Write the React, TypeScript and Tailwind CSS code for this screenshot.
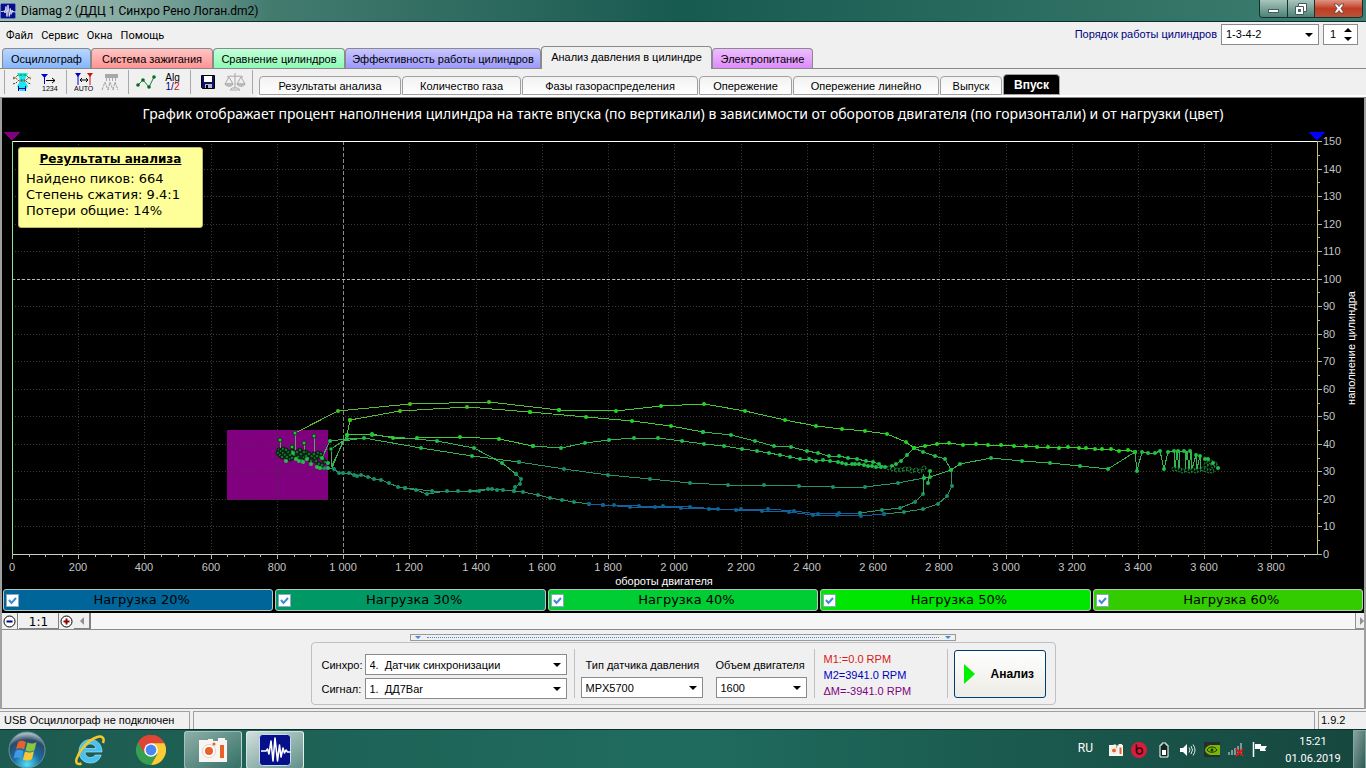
import { useState, type ReactNode } from 'react'

const MENU = ['Файл', 'Сервис', 'Окна', 'Помощь']

const TABS = [
  { label: 'Осциллограф', cls: 'w-[89px] bg-linear-to-b from-[#b9d6ff] to-[#86b6fb]' },
  { label: 'Система зажигания', cls: 'w-[122px] bg-linear-to-b from-[#ffc4c4] to-[#ff9494]' },
  { label: 'Сравнение цилиндров', cls: 'w-[132px] bg-linear-to-b from-[#c2ffda] to-[#8dfab4]' },
  { label: 'Эффективность работы цилиндров', cls: 'w-[196px] bg-linear-to-b from-[#c8c6ff] to-[#9c98fb]' },
  { label: 'Анализ давления в цилиндре', cls: 'w-[171px]' },
  { label: 'Электропитание', cls: 'w-[101px] bg-linear-to-b from-[#eebcff] to-[#dd8cfa]' },
]

const VIEWS = [
  { label: 'Результаты анализа', cls: 'w-[142px]' },
  { label: 'Количество газа', cls: 'w-[119px]' },
  { label: 'Фазы газораспределения', cls: 'w-[176px]' },
  { label: 'Опережение', cls: 'w-[93px]' },
  { label: 'Опережение линейно', cls: 'w-[146px]' },
  { label: 'Выпуск', cls: 'w-[62px]' },
  { label: 'Впуск', cls: 'w-[57px]' },
]

const LOADS = [
  { label: 'Нагрузка 20%', cls: 'bg-[#006699]' },
  { label: 'Нагрузка 30%', cls: 'bg-[#009966]' },
  { label: 'Нагрузка 40%', cls: 'bg-[#00cc33]' },
  { label: 'Нагрузка 50%', cls: 'bg-[#00e600]' },
  { label: 'Нагрузка 60%', cls: 'bg-[#33cc00]' },
]

type Pt = [number, number]
interface Series {
  load: number
  dots?: boolean
  pts: Pt[]
}

const LOAD_COLORS: Record<number, string> = {
  20: '#0d6296',
  30: '#1a9068',
  40: '#1fc048',
  50: '#1fd81f',
  60: '#40c820',
}

const LINE_COLORS: Record<number, string> = {
  20: '#14609a',
  30: '#2a9468',
  40: '#35b552',
  50: '#45c83a',
  60: '#5fb83a',
}

const SERIES: Series[] = [
  { load: 60, pts: [[295, 433], [338, 411], [410, 404], [489, 402], [559, 410]] },
  { load: 50, pts: [[559, 410], [616, 411], [661, 406], [704, 404], [745, 411], [785, 420], [816, 426], [842, 429], [865, 431], [887, 434], [906, 442], [914, 448]] },
  { load: 40, pts: [[914, 448], [923, 452], [935, 456], [945, 459], [951, 470]] },
  { load: 30, pts: [[951, 470], [952, 486], [947, 496], [938, 504], [923, 509], [904, 512], [884, 514]] },
  { load: 50, pts: [[347, 435], [350, 420]] },
  { load: 60, pts: [[350, 420], [400, 411], [467, 407], [530, 412]] },
  { load: 50, pts: [[530, 412], [586, 417], [632, 421], [671, 426], [703, 432]] },
  { load: 40, pts: [[703, 432], [731, 435], [755, 441], [774, 446], [791, 447], [807, 451], [818, 453], [829, 456], [839, 456], [848, 458], [857, 459], [866, 461], [873, 462], [879, 464], [885, 467], [892, 466], [896, 464], [901, 461], [907, 455], [914, 448]] },
  { load: 50, pts: [[347, 435], [372, 434], [393, 438], [417, 438], [460, 437], [499, 439], [533, 446]] },
  { load: 40, pts: [[533, 446], [561, 448], [585, 443], [609, 440], [634, 438], [658, 438], [682, 441], [704, 444], [724, 446], [742, 449], [757, 451], [769, 453], [780, 455], [790, 457], [800, 459], [809, 459], [816, 461], [823, 460], [830, 461], [838, 462], [842, 463], [846, 464], [852, 464], [855, 464], [859, 464], [864, 465], [868, 466], [872, 466], [876, 467], [881, 467]] },
  { load: 40, pts: [[322, 458], [330, 441], [347, 439], [364, 438], [421, 448], [472, 456], [519, 462]] },
  { load: 30, pts: [[519, 462], [564, 469], [608, 475], [650, 479], [690, 483], [728, 485], [764, 485], [799, 486], [833, 487], [865, 487], [898, 483], [924, 478]] },
  { load: 40, pts: [[924, 478], [930, 477], [951, 470], [960, 464], [991, 458], [1022, 461], [1050, 463], [1080, 466], [1108, 469], [1135, 452]] },
  { load: 40, dots: false, pts: [[331, 449], [343, 441], [364, 438]] },
  { load: 40, pts: [[372, 435], [437, 441], [474, 448], [502, 463], [516, 474]] },
  { load: 30, pts: [[516, 474], [521, 479], [520, 484], [515, 487], [514, 491]] },
  { load: 30, pts: [[324, 468], [334, 469], [339, 473], [343, 473], [349, 473], [354, 475], [357, 476], [361, 475], [368, 477], [374, 479], [381, 480], [389, 483], [398, 487], [405, 488], [416, 490], [427, 494], [447, 491], [470, 491], [488, 489], [503, 490], [514, 491], [523, 492], [538, 495], [550, 498], [562, 500], [574, 502], [589, 504]] },
  { load: 30, pts: [[405, 488], [432, 491], [458, 491], [479, 491], [492, 489], [497, 490]] },
  { load: 20, pts: [[589, 504], [603, 505], [630, 507], [655, 507], [681, 508], [709, 509], [736, 510], [762, 511], [789, 512], [813, 515], [837, 515], [861, 516], [884, 514]] },
  { load: 20, pts: [[603, 505], [614, 505], [639, 506], [663, 506], [690, 507], [718, 509], [741, 509], [768, 509], [794, 511], [818, 514], [839, 513], [860, 513]] },
  { load: 30, pts: [[860, 513], [882, 510], [900, 508], [915, 502], [923, 494]] },
  { load: 40, dots: false, pts: [[923, 494], [924, 474]] },
  { load: 40, pts: [[928, 483], [930, 471]] },
  { load: 50, pts: [[914, 448], [925, 446], [937, 444], [949, 443], [963, 445], [976, 444], [988, 445], [1001, 445], [1014, 446], [1026, 446], [1037, 447], [1048, 447], [1059, 448], [1068, 447], [1079, 448], [1086, 448], [1095, 449], [1102, 449], [1111, 449], [1119, 451], [1128, 450], [1135, 452]] },
  { load: 40, pts: [[1135, 452], [1137, 471], [1142, 452], [1148, 453], [1155, 453], [1160, 451], [1164, 469], [1168, 452], [1174, 451]] },
  { load: 40, dots: false, pts: [[1174, 451], [1175, 469], [1177, 451], [1179, 469], [1180, 451], [1185, 451], [1185, 469], [1187, 451], [1189, 469], [1191, 452], [1192, 469], [1196, 455], [1197, 469], [1200, 456], [1201, 470]] },
  { load: 40, dots: false, pts: [[343, 441], [332, 468]] },
  { load: 40, dots: false, pts: [[347, 435], [331, 467]] },
]

const STEMS: [number, number, number][] = [
  [280, 440, 451],
  [295, 433, 458],
  [304, 443, 460],
  [314, 436, 456],
  [292, 447, 455],
  [331, 449, 466],
]

// outlined dots drawn where the samples pile up
const CLUSTER: Pt[] = [
  [279, 450], [281, 451], [278, 453], [283, 453], [280, 455], [285, 455], [288, 452], [290, 455], [287, 457], [292, 451],
  [294, 455], [297, 452], [298, 457], [301, 454], [304, 457], [306, 452], [309, 454], [308, 458], [312, 456], [315, 458],
  [318, 453], [316, 461], [320, 457], [319, 464], [323, 459], [322, 465], [311, 461], [325, 462], [302, 460], [290, 459],
  [283, 449], [286, 450], [300, 450], [304, 452], [314, 454], [317, 456], [321, 454], [282, 457], [292, 458], [306, 456],
]

const TAIL: Pt[] = [
  [889, 468], [893, 469], [897, 470], [901, 470], [905, 469], [909, 469], [912, 471], [916, 470], [920, 471], [924, 468],
  [1174, 469], [1177, 469], [1180, 470], [1183, 471], [1187, 470], [1190, 471], [1193, 470], [1196, 471], [1199, 470],
  [1203, 469], [1206, 470], [1209, 471], [1212, 471], [1206, 465], [1209, 463], [1211, 462], [1213, 466], [1215, 464],
]

const LOOSE: Pt[] = [
  [1178, 451], [1184, 451], [1190, 451], [1196, 455], [1200, 456], [1205, 459], [1208, 459], [1213, 463], [1218, 468],
  [286, 461], [296, 459], [299, 461], [303, 462], [311, 464], [317, 467], [307, 459], [328, 463], [328, 468], [322, 458],
  [293, 453], [320, 468],
]

const X0 = 12
const X1 = 1317
const Y0 = 554
const Y1 = 141
const toX = (rpm: number) => Math.round(X0 + rpm * 0.3312)
const toY = (fill: number) => Math.round(Y0 - fill * 2.753)
const range = (n: number, step: number) => Array.from({ length: n }, (_, i) => i * step)
const groupDigits = (v: number) => (v < 1000 ? String(v) : `${Math.floor(v / 1000)} ${String(v % 1000).padStart(3, '0')}`)

function Chart() {
  return (
    <svg viewBox="2 129 1362 459" className="block w-full h-auto" role="img" aria-label="Наполнение цилиндра">
      <rect x="2" y="129" width="1362" height="459" fill="#000" />
      <g shapeRendering="crispEdges">
        <rect x="227" y="430" width="101" height="70" fill="#800080" />
        {/* grid */}
        <g stroke="#3c3c2e" strokeDasharray="1 2">
          {range(19, 200).map((v) => (
            <line key={v} x1={toX(v + 200) + 0.5} x2={toX(v + 200) + 0.5} y1={Y1} y2={Y0} />
          ))}
          {range(14, 10).map((v) => (
            <line key={v} x1={X0} x2={X1} y1={toY(v + 10) + 0.5} y2={toY(v + 10) + 0.5} />
          ))}
        </g>
        <line x1="343.5" x2="343.5" y1={Y1} y2={Y0} stroke="#8a8a8a" strokeDasharray="4 2" />
        <line x1={X0} x2={X1} y1="279.5" y2="279.5" stroke="#b8b8b8" strokeDasharray="3 2" />
        <line x1={X0} x2={X1} y1="141.5" y2="141.5" stroke="#fff" />
        <line x1="12.5" x2="12.5" y1={Y1} y2={Y0} stroke="#8fe88f" />
        <line x1="1317.5" x2="1317.5" y1={Y1} y2={Y0} stroke="#c8c070" />
        <line x1={X0} x2="1322" y1="554.5" y2="554.5" stroke="#c8d0c0" />
        {/* ticks */}
        <g stroke="#b0b8a8">
          {range(79, 50).map((v) => (
            <line key={v} x1={toX(v) + 0.5} x2={toX(v) + 0.5} y1={Y0} y2={v % 200 === 0 ? 559 : 557} />
          ))}
          {range(31, 5).map((v) => (
            <line key={v} x1={X1} x2={v % 10 === 0 ? 1322 : 1320} y1={toY(v) + 0.5} y2={toY(v) + 0.5} />
          ))}
        </g>
        <polygon points="4,132 20,132 12,141" fill="#800080" />
        <polygon points="1309,132 1325,132 1317,141" fill="#0000ff" />
      </g>

      <g fill="#c4c4c4" fontSize="11" fontFamily="'Liberation Sans', Arial, sans-serif">
        {range(20, 200).map((v) => (
          <text key={v} x={toX(v)} y="571" textAnchor="middle">
            {groupDigits(v)}
          </text>
        ))}
        {range(16, 10).map((v) => (
          <text key={v} x="1323" y={toY(v) + 4}>
            {v}
          </text>
        ))}
      </g>
      <g fill="#fff" fontSize="11" textAnchor="middle" fontFamily="'Liberation Sans', Arial, sans-serif">
        <text x="664" y="585">обороты двигателя</text>
        <text transform="translate(1355 348) rotate(-90)">наполнение цилиндра</text>
      </g>

      {SERIES.map((s, i) => (
        <g key={i}>
          <polyline
            points={s.pts.map((p) => p.join(',')).join(' ')}
            fill="none"
            stroke={LINE_COLORS[s.load]}
            shapeRendering="crispEdges"
          />
          {s.dots !== false && s.pts.map(([x, y], n) => <circle key={n} cx={x} cy={y} r="2" fill={LOAD_COLORS[s.load]} />)}
        </g>
      ))}
      {STEMS.map(([x, top, bottom]) => (
        <g key={x}>
          <line x1={x + 0.5} x2={x + 0.5} y1={top} y2={bottom} stroke="#5e9c6c" />
          <circle cx={x} cy={top} r="2" fill="#22c050" stroke="#063806" />
        </g>
      ))}
      {CLUSTER.map(([x, y], i) => (
        <circle key={i} cx={x} cy={y} r="2" fill="#127030" stroke="#001800" strokeWidth="1" />
      ))}
      {TAIL.map(([x, y], i) => (
        <circle key={i} cx={x} cy={y} r="2" fill="#000" stroke="#22b048" strokeWidth="1" strokeDasharray="2 1" />
      ))}
      {LOOSE.map(([x, y], i) => (
        <circle key={i} cx={x} cy={y} r="2" fill="#22c048" />
      ))}
    </svg>
  )
}

function PulseIcon({ className }: { className: string }) {
  return (
    <svg viewBox="0 0 32 32" className={className} aria-hidden="true">
      <rect x="0.5" y="0.5" width="31" height="31" rx="3" fill="#06108a" stroke="#c8d8f8" />
      <path
        d="M2 17h5l1.500-2 1.500 5 2-13 2 20 2-23 2.500 23 2-16 1.500 12 2-9 1.500 5 1.500-3 1.500 2h3"
        fill="none"
        stroke="#fff"
        strokeWidth="1.600"
        strokeLinejoin="round"
      />
    </svg>
  )
}

function CameraIcon({ className }: { className: string }) {
  return (
    <svg viewBox="0 0 28 24" className={className} aria-hidden="true">
      <path d="M0 2h9v-1h5v2h5V0h7v2h2v22H0z" fill="#f8f4f0" />
      <circle cx="10" cy="13" r="6.500" fill="#fff" stroke="#d8d4d0" />
      <circle cx="10" cy="13" r="4" fill="#e8602a" />
      <circle cx="15" cy="6" r="1.500" fill="#e8602a" />
      <rect x="21" y="7" width="4" height="13" fill="#e8602a" />
    </svg>
  )
}

function Separator() {
  return <span className="w-px h-6 ml-1 mr-[3px] bg-[#a8a8a8]" />
}

function ToolButton({ label, children }: { label: string; children: ReactNode }) {
  return (
    <button aria-label={label} className="w-[27px] h-6 flex items-center justify-center">
      {children}
    </button>
  )
}

function Toolbar() {
  return (
    <div className="flex items-center w-[257px] pb-[2px]">
      <Separator />
      <ToolButton label="Фазы">
        <svg viewBox="0 0 20 20" className="w-5 h-5">
          <path d="M5 1h11l-2 4-1 3 1 3 2 3-3 5H8l-3-5 2-3 1-3-1-3z" fill="#18e8f0" />
          <path d="M1 7l2-1 3-3h8l3 3 2 1" fill="none" stroke="#108010" strokeDasharray="3 1" />
          <path d="M1 12l3-1 3-3h6l3 3 3 1" fill="none" stroke="#106010" strokeDasharray="2 1" />
          <path d="M1 5l4 2 2 2h6l2-2 4-2" fill="none" stroke="#d02020" strokeDasharray="2 1" />
          <path d="M6 16.500h8M6.500 14v5M13.500 14v5" stroke="#0000a0" fill="none" />
        </svg>
      </ToolButton>
      <ToolButton label="Нумерация">
        <svg viewBox="0 0 18 20" className="w-[18px] h-5">
          <path d="M1 2h7L4.500 6z" fill="#0000d0" />
          <path d="M4.500 4v8" stroke="#0000d0" />
          <path d="M6 8.500h9M12 6l3 2.500-3 2.500" fill="none" stroke="#000" />
          <text x="2" y="19" fontSize="7" fontFamily="Liberation Sans">1234</text>
        </svg>
      </ToolButton>
      <Separator />
      <ToolButton label="Авто">
        <svg viewBox="0 0 20 20" className="w-5 h-5">
          <path d="M1 1h6L4 5z" fill="#0000d0" />
          <path d="M4 3v10" stroke="#0000d0" />
          <path d="M13 1h6l-3 4z" fill="#d01010" />
          <path d="M16 3v10" stroke="#d01010" />
          <path d="M6 8h8M8 6L6 8l2 2M12 6l2 2-2 2" fill="none" stroke="#000" />
          <text x="0" y="19" fontSize="7" fontFamily="Liberation Sans">AUTO</text>
        </svg>
      </ToolButton>
      <ToolButton label="Фильтр">
        <svg viewBox="0 0 20 20" className="w-5 h-5">
          <path d="M4 2h13v4H4z" fill="#a8a8a8" />
          <path d="M5.500 6v3M8.500 6v3M11.500 6v3M14.500 6v3" stroke="#a8a8a8" />
          <path d="M1 18l3-8 3 8M7 18l2-8 3 8M12 18l2-8 3 8" fill="none" stroke="#a0a0a0" strokeDasharray="3 1" />
        </svg>
      </ToolButton>
      <Separator />
      <ToolButton label="Точки">
        <svg viewBox="0 0 20 20" className="w-5 h-5">
          <path d="M2 13l5-5 6 7 5-10" fill="none" stroke="#108030" />
          <g fill="#0a6a1a">
            <circle cx="2" cy="13" r="1.800" />
            <circle cx="7" cy="8" r="1.800" />
            <circle cx="13" cy="15" r="1.800" />
            <circle cx="18" cy="5" r="1.800" />
          </g>
        </svg>
      </ToolButton>
      <ToolButton label="Алгоритм">
        <span className="text-[10px] leading-[9px]">
          Alg
          <br />
          <span className="text-[#000080]">1/</span>
          <span className="text-[#d01010]">2</span>
        </span>
      </ToolButton>
      <Separator />
      <ToolButton label="Сохранить">
        <svg viewBox="0 0 16 16" className="w-4 h-4">
          <path d="M1.500 1.500h13v13h-12l-1-1z" fill="#10106a" stroke="#000" />
          <path d="M4 2h8v6H4z" fill="#fff" />
          <path d="M5 10h7v4H5z" fill="#b8b8c8" />
          <path d="M6 11h2v3H6z" fill="#000" />
        </svg>
      </ToolButton>
      <ToolButton label="Баланс">
        <svg viewBox="0 0 22 20" className="w-[22px] h-5" fill="none" stroke="#a8a8a8">
          <path d="M11 1v15M3 5c3-2 5 0 8-1 3 1 5-1 8 1M5 5l-4 7h8zM17 5l-4 7h8zM6 18h10l-2-2H8z" />
          <path d="M1 12h8c-1 3-7 3-8 0zM13 12h8c-1 3-7 3-8 0z" fill="#c8c8c8" />
        </svg>
      </ToolButton>
      <Separator />
    </div>
  )
}

function Combo({ id, options, className }: { id: string; options: string[]; className: string }) {
  return (
    <div className={`relative h-[21px] ${className}`}>
      <select
        id={id}
        className="appearance-none w-full h-full bg-white border border-[#8a8a8a] pl-1 pr-5 text-[11px] leading-4 text-black outline-none"
      >
        {options.map((o) => (
          <option key={o}>{o}</option>
        ))}
      </select>
      <svg viewBox="0 0 8 4" className="absolute right-1.5 top-[9px] w-2 h-1 pointer-events-none">
        <path d="M0 0h8L4 4z" fill="#000" />
      </svg>
    </div>
  )
}

function TitleBar() {
  return (
    <header className="flex items-start justify-between h-[22px] border-b border-[#0c2f2c] bg-linear-to-r from-[#5d9184] via-[#175a50] to-[#3d7f70]">
      <div className="flex items-center h-[21px] gap-[5px] bg-linear-to-r from-white/40 via-white/30 to-transparent pr-3">
        <PulseIcon className="w-4 h-4" />
        <h1 className="font-[Roboto,sans-serif] text-[12px] leading-4 text-black">Diamag 2 (ДДЦ 1 Синхро Рено Логан.dm2)</h1>
      </div>
      <div className="flex h-[18px] mr-[3px] rounded-b border border-t-0 border-[#17302e] overflow-hidden">
        <button aria-label="Свернуть" className="w-7 flex items-center justify-center border-r border-[#17302e] bg-linear-to-b from-[#a9c5bd] to-[#4b8276]">
          <span className="w-[11px] h-1 mt-1 bg-white border border-[#4a5a58]" />
        </button>
        <button aria-label="Восстановить" className="w-[27px] flex items-center justify-center border-r border-[#17302e] bg-linear-to-b from-[#a9c5bd] to-[#4b8276]">
          <svg viewBox="0 0 12 12" className="w-3 h-3">
            <path d="M3.500 0.500h8v8h-3v3h-8v-8h3z" fill="#fff" stroke="#4a5a58" />
            <path d="M3 6h3v3H3z" fill="#4a6a64" />
            <path d="M3.500 3.500h5v5" fill="none" stroke="#4a5a58" />
          </svg>
        </button>
        <button aria-label="Закрыть" className="w-[47px] flex items-center justify-center bg-linear-to-b from-[#dc9483] via-[#c23b22] to-[#b5533a]">
          <svg viewBox="0 0 12 11" className="w-3 h-[11px]">
            <path d="M1 1h3l2 2.500L8 1h3L8 5.500l3 4.500H8L6 7.500 4 10H1l3-4.500z" fill="#fff" stroke="#5a3a38" strokeWidth="0.800" />
          </svg>
        </button>
      </div>
    </header>
  )
}

function LoadToggle({ label, cls }: { label: string; cls: string }) {
  const [checked, setChecked] = useState(true)
  return (
    <label className={`flex items-center h-[22px] pl-[2px] rounded-[3px] border border-[#b8c8c0] ${cls}`}>
      <span className="relative w-[13px] h-[13px]">
        <input
          type="checkbox"
          checked={checked}
          onChange={(e) => setChecked(e.target.checked)}
          className="peer appearance-none block w-[13px] h-[13px] bg-white border border-[#8ca8c0]"
        />
        <svg viewBox="0 0 13 13" className="absolute inset-0 w-[13px] h-[13px] pointer-events-none invisible peer-checked:visible">
          <path d="M3 6l2.500 3L10 4" fill="none" stroke="#3c8cd8" strokeWidth="2" />
        </svg>
      </span>
      <span className="flex-1 pr-2 text-center font-['DejaVu_Sans',Verdana,sans-serif] text-[13px] leading-4 text-black">{label}</span>
    </label>
  )
}

function ZoomBar() {
  return (
    <div className="flex h-[17px] border-b border-[#8a8a8a] bg-[#f6f6f6]">
      <button aria-label="Уменьшить" className="w-4 bg-[#f0f0f0] border-r border-[#808080] flex items-center justify-center">
        <svg viewBox="0 0 13 13" className="w-[13px] h-[13px]">
          <circle cx="6.500" cy="6.500" r="5.500" fill="#fff" stroke="#000" />
          <path d="M3.500 6.500h6" stroke="#000080" strokeWidth="2" />
        </svg>
      </button>
      <button className="w-10 ml-px pt-px bg-[#f0f0f0] border-r border-b border-[#808080] font-['DejaVu_Sans',Verdana,sans-serif] text-[12px] leading-4">
        1:1
      </button>
      <button aria-label="Увеличить" className="w-[15px] bg-[#f0f0f0] flex items-center justify-center">
        <svg viewBox="0 0 13 13" className="w-[13px] h-[13px]">
          <circle cx="6.500" cy="6.500" r="5.500" fill="#fff" stroke="#000" />
          <path d="M3.500 6.500h6M6.500 3.500v6" stroke="#900000" strokeWidth="2" />
        </svg>
      </button>
      <button aria-label="Влево" className="w-[17px] bg-[#f0f0f0] border-r-2 border-b border-[#808080] flex items-center justify-center">
        <svg viewBox="0 0 4 8" className="w-1 h-2">
          <path d="M4 0v8L0 4z" fill="#909090" />
        </svg>
      </button>
      <span className="flex-1" />
      <button aria-label="Вправо" className="w-[9px] bg-[#f0f0f0] border-l border-b border-[#909090] flex items-center justify-end">
        <svg viewBox="0 0 4 8" className="w-1 h-2">
          <path d="M0 0v8l4-4z" fill="#909090" />
        </svg>
      </button>
    </div>
  )
}

function AnalysisPanel() {
  return (
    <section className="flex flex-col items-center pt-1 pb-[3px] border-b border-[#8a8a8a]">
      <button aria-label="Свернуть панель" className="flex items-center gap-1.5 w-[546px] h-[7px] px-1 border border-[#9a9a9a]">
        <svg viewBox="0 0 6 3" className="w-1.5 h-[3px]">
          <path d="M0 0h6L3 3z" fill="#3c8cd8" />
        </svg>
        <span className="flex-1 border-t border-dotted border-[#3c8cd8]" />
        <svg viewBox="0 0 6 3" className="w-1.5 h-[3px]">
          <path d="M0 0h6L3 3z" fill="#3c8cd8" />
        </svg>
      </button>
      <div className="flex items-center w-[745px] h-[63px] mt-px pl-[10px] border border-[#c0c0c0] rounded text-[11px] leading-4">
        <div className="grid grid-cols-[43px_202px] gap-y-[3px] items-center pt-1.5">
          <label htmlFor="sync">Синхро:</label>
          <Combo id="sync" options={['4.\u00a0 Датчик синхронизации']} className="w-[202px]" />
          <label htmlFor="signal">Сигнал:</label>
          <Combo id="signal" options={['1.\u00a0 ДД7Bar']} className="w-[202px]" />
        </div>
        <span className="w-px h-[49px] ml-[7px] bg-[#c0c0c0]" />
        <div className="flex flex-col gap-1 ml-1.5 pt-2">
          <label htmlFor="sensor" className="pl-[5px]">Тип датчика давления</label>
          <Combo id="sensor" options={['MPX5700']} className="w-[122px]" />
        </div>
        <div className="flex flex-col gap-1 ml-[13px] pt-2">
          <label htmlFor="volume">Объем двигателя</label>
          <Combo id="volume" options={['1600']} className="w-[91px]" />
        </div>
        <span className="w-px h-[49px] ml-[7px] bg-[#c0c0c0]" />
        <div className="flex flex-col w-[132px] pl-[9px] pt-[2px]">
          <span className="text-[#d81818]">М1:=0.0 RPM</span>
          <span className="text-[#0000c0]">М2=3941.0 RPM</span>
          <span className="text-[#800080]">ΔМ=-3941.0 RPM</span>
        </div>
        <span className="w-px h-[49px] bg-[#c0c0c0]" />
        <button className="flex items-center w-[92px] h-12 ml-1.5 pl-[9px] gap-4 rounded-[3px] border border-[#003c74] bg-linear-to-b from-white to-[#ecebe5] font-bold text-[12px]">
          <svg viewBox="0 0 11 20" className="w-[11px] h-5">
            <path d="M0 0v20l11-10z" fill="#00f000" />
          </svg>
          Анализ
        </button>
      </div>
    </section>
  )
}

function StatusBar() {
  return (
    <div className="flex items-stretch h-[18px] mt-[2px] gap-[3px] text-[11px] leading-[17px]">
      <span className="w-[190px] pl-1 border-t border-r border-[#a0a0a0]">USB Осциллограф не подключен</span>
      <span className="flex-1 border-t border-x border-[#a0a0a0]" />
      <span className="w-12 pl-[2px] border-t border-l border-[#a0a0a0]">1.9.2</span>
    </div>
  )
}

function TaskBar() {
  return (
    <footer className="flex items-center h-10 border-t border-[#0c2f2c] bg-linear-to-r from-[#1d5a50] via-[#1f6c5e] to-[#16473f] text-white">
      <div className="flex items-center flex-1 pl-2">
        <button aria-label="Пуск" className="w-[38px]">
          <svg viewBox="0 0 38 38" className="w-[38px] h-[38px]">
            <defs>
              <radialGradient id="orb" cx="50%" cy="90%" r="85%">
                <stop offset="0" stopColor="#4fe0f8" />
                <stop offset="0.450" stopColor="#1c6aa0" />
                <stop offset="0.800" stopColor="#2a4a68" />
                <stop offset="1" stopColor="#a8b8c0" />
              </radialGradient>
            </defs>
            <circle cx="19" cy="19" r="18" fill="url(#orb)" stroke="#6a94a0" />
            <path d="M10 11c3-2 5-1.500 8 0l-2 7.500c-3-1.500-5-2-8 0z" fill="#e8602a" />
            <path d="M19.500 11.500c3 1.500 6 1.500 9-0.500l-2 8c-3 2-6 2-9 0.500z" fill="#8cc63f" />
            <path d="M7.500 20c3-2 5-1.500 8 0l-2 7.500c-3-1.500-5-1.500-8 0z" fill="#3c9ce8" />
            <path d="M17 20.500c3 1.500 6 1.500 9-0.500l-2 8c-3 2-6 2-9 0.500z" fill="#f8c830" />
          </svg>
        </button>
        <button aria-label="Internet Explorer" className="ml-7">
          <svg viewBox="0 0 32 32" className="w-8 h-8">
            <path
              d="M28 18H11c0 3.500 2.500 5.500 5.500 5.500 2.200 0 3.800-1 4.700-2.500h6c-1.500 5-5.500 8-10.700 8C10 29 5 24.500 5 17.500S10 5.500 16.500 5.500 28 10.500 28 18zM11.200 14.500h10.600c-0.500-3-2.500-4.500-5.300-4.500s-4.700 1.500-5.300 4.500z"
              fill="#48c0f0"
              stroke="#c0ecff"
              strokeWidth="0.600"
            />
            <path d="M29 9c2-5-1-8-7-5.500C13 7 5 17 2.500 25c-1 4 1 6 5 4.500" fill="none" stroke="#f4c828" strokeWidth="2.500" />
          </svg>
        </button>
        <button aria-label="Google Chrome" className="ml-[30px]">
          <svg viewBox="0 0 30 30" className="w-[30px] h-[30px]">
            <path d="M15 15L2 7.500A15 15 0 0 1 28 7.500z" fill="#e04434" />
            <path d="M15 15L2 7.500A15 15 0 0 0 15 30l6.500-11.300z" fill="#34a050" />
            <path d="M15 15l6.500 3.700L15 30A15 15 0 0 0 28 7.500H15z" fill="#fccc34" />
            <path d="M15 8.200h13.300A15 15 0 0 0 2 7.500l6.800 11z" fill="#e04434" />
            <circle cx="15" cy="15" r="6.800" fill="#fff" />
            <circle cx="15" cy="15" r="5.400" fill="#4888f0" />
          </svg>
        </button>
        <button
          aria-label="Bandicam"
          className="flex items-center justify-center w-[58px] h-[38px] ml-[18px] rounded-[3px] border border-white/50 bg-linear-to-br from-white/50 to-white/10"
        >
          <CameraIcon className="w-7 h-6" />
        </button>
        <button
          aria-label="Diamag 2"
          className="flex items-center justify-center w-[58px] h-[38px] ml-1 rounded-[3px] border border-white/70 bg-linear-to-br from-white/80 to-white/30"
        >
          <PulseIcon className="w-8 h-8" />
        </button>
      </div>
      <div className="flex items-center">
        <span className="font-[Roboto,sans-serif] text-[12px] leading-4 mb-1 mr-4">RU</span>
        <CameraIcon className="w-3.5 h-3" />
        <svg viewBox="0 0 16 16" className="w-4 h-4 ml-2" aria-label="Beats">
          <circle cx="8" cy="8" r="8" fill="#d81c3c" />
          <path d="M5.500 2.500v6.500" stroke="#3a0a14" strokeWidth="1.600" />
          <circle cx="8.500" cy="9" r="3" fill="none" stroke="#3a0a14" strokeWidth="1.600" />
        </svg>
        <svg viewBox="0 0 10 16" className="w-2.5 h-4 ml-3" aria-label="Батарея">
          <path d="M3 1h4v2h2v12H1V3h2z" fill="#102824" stroke="#fff" />
          <path d="M3 8h4v5H3z" fill="#fff" />
        </svg>
        <svg viewBox="0 0 16 14" className="w-4 h-3.5 ml-[11px]" aria-label="Громкость">
          <path d="M0 5h3l4-4v12L3 9H0z" fill="#fff" />
          <path d="M9 4.500q2 2.500 0 5M11 3q3 4 0 8M13 1.500q4 5.500 0 11" fill="none" stroke="#e0e8e8" />
        </svg>
        <svg viewBox="0 0 16 15" className="w-4 h-[15px] ml-2" aria-label="NVIDIA">
          <rect width="16" height="15" fill="#2a2a30" />
          <path d="M6 3h10v10H6c-3-1-5-3-5-5s2-4 5-5z" fill="#76b900" />
          <path d="M3 8c2-4 8-4 10 0-2 3-8 3-10 0z" fill="none" stroke="#20300a" />
          <circle cx="8" cy="8" r="1.500" fill="#20300a" />
        </svg>
        <svg viewBox="0 0 16 15" className="w-4 h-[15px] ml-2" aria-label="Сеть">
          <path d="M0 10h2v3H0zM3 8h2v5H3zM6 6h2v7H6zM9 4h2v9H9zM12 1h2v12h-2z" fill="#7f9a96" />
          <path d="M8 7l7 7M15 7l-7 7" stroke="#d81818" strokeWidth="2" />
        </svg>
        <svg viewBox="0 0 16 15" className="w-4 h-[15px] ml-2" aria-label="Центр поддержки">
          <path d="M1.500 0v15" stroke="#fff" strokeWidth="1.500" />
          <path d="M3 2h6v2h6l-2 3 1 2H8V7H3z" fill="#fff" />
        </svg>
        <div className="flex flex-col items-center w-20 ml-[5px] font-[Roboto,sans-serif] text-[11px] leading-[17px]">
          <span>15:21</span>
          <span>01.06.2019</span>
        </div>
        <button aria-label="Показать рабочий стол" className="w-[13px] h-[39px] border border-[#7fa8a0] bg-linear-to-br from-white/50 to-white/10" />
      </div>
    </footer>
  )
}

export default function App() {
  const [tab, setTab] = useState(4)
  const [view, setView] = useState(6)
  const [cylinder, setCylinder] = useState(1)

  return (
    <div className="bg-[#f0f0f0] text-black font-['Liberation_Sans',Arial,sans-serif] overflow-hidden">
      <TitleBar />

      <div className="flex items-center justify-between h-6">
        <nav className="flex pl-1.5 pt-1 gap-2 font-[Roboto,sans-serif] text-[11px] leading-4">
          {MENU.map((m) => (
            <button key={m}>{m}</button>
          ))}
        </nav>
        <div className="flex items-center gap-1 pr-2 text-[11px]">
          <label htmlFor="order" className="text-[#000080]">Порядок работы цилиндров</label>
          <Combo id="order" options={['1-3-4-2']} className="w-[98px]" />
          <div className="flex items-center w-[35px] h-[21px] bg-white border border-[#8a8a8a]">
            <input
              aria-label="Цилиндр"
              value={cylinder}
              onChange={(e) => setCylinder(Number(e.target.value) || 1)}
              className="w-5 pl-1.5 bg-transparent outline-none"
            />
            <svg viewBox="0 0 8 13" className="w-2 h-[13px]">
              <path d="M0 4h8L4 0zM0 9h8l-4 4z" fill="#000" />
            </svg>
          </div>
        </div>
      </div>

      <div role="tablist" className="flex items-end h-[23px] pl-[2px] border-b border-[#8a8a8a] text-[11px] leading-4">
        {TABS.map((t, i) => (
          <button
            key={t.label}
            role="tab"
            aria-selected={i === tab}
            onClick={() => setTab(i)}
            className={`whitespace-nowrap rounded-t border border-b-0 border-[#8a8a8a] ${t.cls} ${
              i === tab ? 'h-[23px] -mb-px pb-[2px] bg-[#f0f0f0]' : 'h-5'
            }`}
          >
            {t.label}
          </button>
        ))}
      </div>

      <div className="flex h-[29px] border-b border-[#8a8a8a]">
        <Toolbar />
        <div role="tablist" className="flex flex-1 items-end pl-[2px] border-b-2 border-white text-[11px] leading-4">
          {VIEWS.map((v, i) => (
            <button
              key={v.label}
              role="tab"
              aria-selected={i === view}
              onClick={() => setView(i)}
              className={`mr-px whitespace-nowrap rounded-t-sm border border-[#a0a0a0] ${v.cls} ${
                i === view ? 'h-[21px] bg-black text-white text-[12px] font-bold' : 'h-[19px] bg-linear-to-b from-[#f2f2f2] to-white'
              }`}
            >
              {v.label}
            </button>
          ))}
        </div>
      </div>

      <main className="border-x-2 border-[#a0a0a0]">
        <div className="relative bg-black pb-[2px]">
          <p className="h-[31px] pt-2 text-center text-white whitespace-nowrap font-['Noto_Sans',Verdana,sans-serif] text-[14px] leading-4">
            График отображает процент наполнения цилиндра на такте впуска (по вертикали) в зависимости от оборотов двигателя (по горизонтали) и от нагрузки (цвет)
          </p>
          <Chart />
          <aside className="absolute left-4 top-[49px] w-[185px] h-[81px] px-[7px] pt-[3px] rounded-[3px] border border-[#b8b870] bg-[#ffff99] font-['DejaVu_Sans',Verdana,sans-serif] text-[13px] leading-4">
            <h2 className="mb-1 text-center font-bold underline text-[12px]">Результаты анализа</h2>
            <p>Найдено пиков: 664</p>
            <p>Степень сжатия: 9.4:1</p>
            <p>Потери общие: 14%</p>
          </aside>
          <div className="grid grid-cols-5 gap-[2px] px-px pt-px">
            {LOADS.map((l) => (
              <LoadToggle key={l.label} label={l.label} cls={l.cls} />
            ))}
          </div>
        </div>
        <ZoomBar />
        <AnalysisPanel />
      </main>
      <StatusBar />
      <TaskBar />
    </div>
  )
}
